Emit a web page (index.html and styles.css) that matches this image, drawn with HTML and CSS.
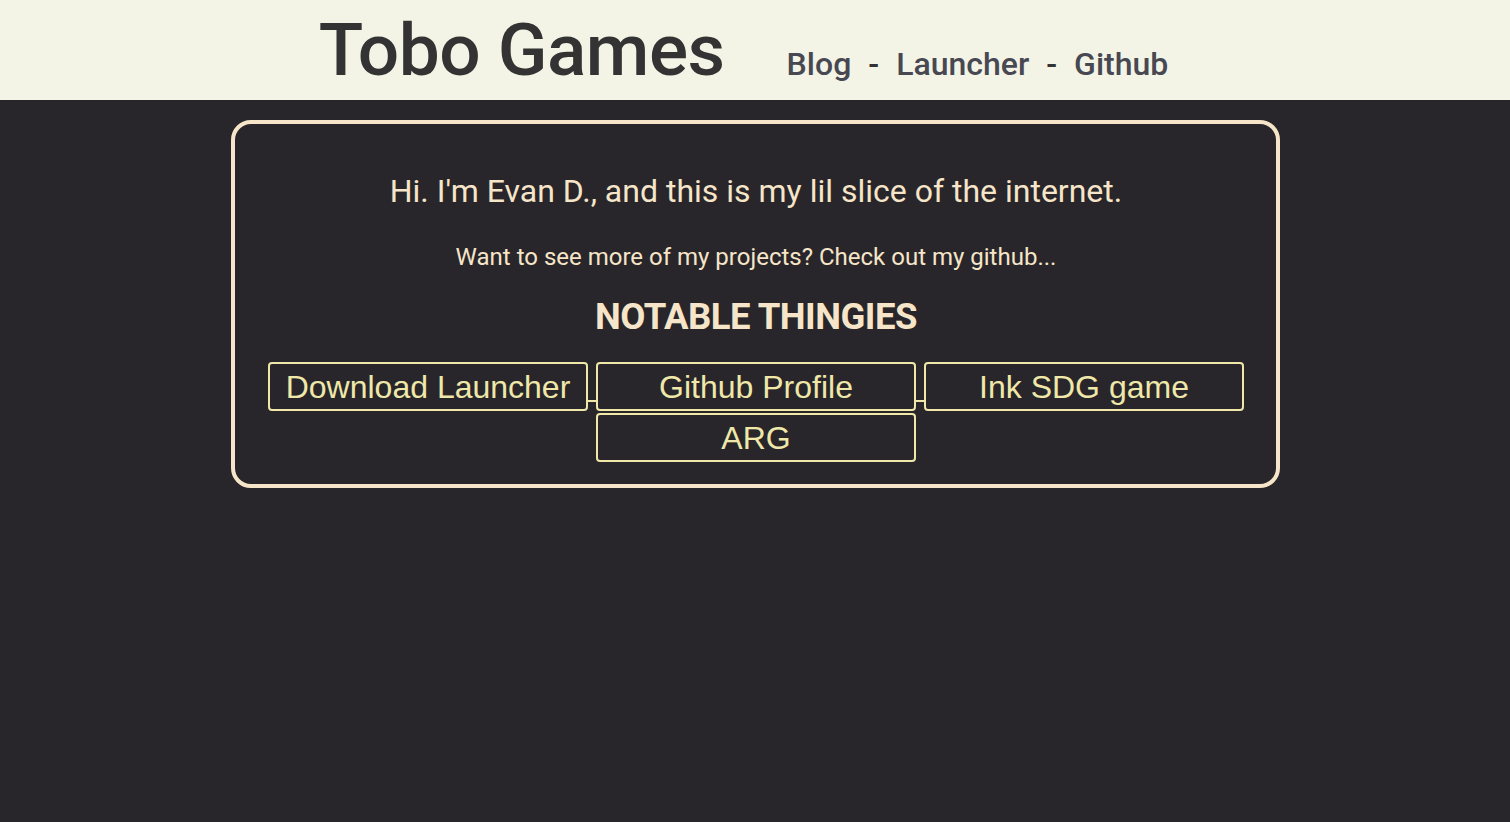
FILE: index.html
```html
<!DOCTYPE html>
<html>
<head>
<meta charset="utf-8">
<link rel="stylesheet" href="styles.css">
</head>
<body>
<header class="topbar">
  <h1 class="title">Tobo Games</h1>
  <nav class="nav">
    <a class="nav-link" href="#">Blog</a>
    <span class="sep">-</span>
    <a class="nav-link" href="#">Launcher</a>
    <span class="sep">-</span>
    <a class="nav-link" href="#">Github</a>
  </nav>
</header>
<main class="card">
  <p class="intro">Hi. I'm Evan D., and this is my lil slice of the internet.</p>
  <p class="sub">Want to see more of my projects? Check out my github...</p>
  <h2 class="heading">NOTABLE THINGIES</h2>
  <div class="buttons">
    <a class="btn join" href="#">Download Launcher</a>
    <a class="btn join" href="#">Github Profile</a>
    <a class="btn" href="#">Ink SDG game</a>
    <a class="btn" href="#">ARG</a>
  </div>
</main>
</body>
</html>
```
FILE: styles.css
```css
html, body {
  margin: 0;
  padding: 0;
}
body {
  background: #28262b;
  font-family: Roboto, "Liberation Sans", sans-serif;
  height: 822px;
}
.topbar {
  background: #f4f4e6;
  height: 100px;
  box-sizing: border-box;
  display: flex;
  justify-content: center;
  align-items: baseline;
  gap: 62px;
  padding-right: 23px;
}
.title {
  margin: 0;
  font-size: 73px;
  font-weight: 500;
  color: #333333;
  line-height: 100px;
  letter-spacing: -0.5px;
}
.nav {
  display: flex;
  align-items: baseline;
  gap: 17px;
  font-size: 32px;
  color: #484852;
  padding-top: 2px;
}
.nav-link {
  color: #484852;
  text-decoration: none;
  font-weight: 500;
}
.sep {
  color: #333;
  font-weight: 500;
}
.card {
  margin: 20px auto 0;
  width: 1049px;
  box-sizing: border-box;
  border: 4px solid #f6e5c8;
  border-radius: 20px;
  padding: 47px 29px 22px 31px;
  text-align: center;
  color: #f6e5c8;
}
.intro {
  margin: 0;
  font-size: 32px;
  line-height: 40px;
}
.sub {
  margin: 31px 0 0;
  font-size: 24px;
  line-height: 30px;
}
.heading {
  margin: 24px 0 0;
  font-size: 36.5px;
  font-weight: 700;
  line-height: 42px;
  letter-spacing: -0.5px;
}
.buttons {
  margin-top: 24px;
  display: flex;
  flex-wrap: wrap;
  justify-content: center;
  column-gap: 8px;
  row-gap: 2px;
}
.btn {
  position: relative;
  width: 320px;
  height: 49px;
  box-sizing: border-box;
  border: 2px solid #efe8a9;
  border-radius: 4px;
  color: #efe8a9;
  text-decoration: none;
  font-family: "Liberation Sans", Arial, sans-serif;
  font-size: 32px;
  line-height: 46px;
  text-align: center;
}
.join::after {
  content: "";
  position: absolute;
  right: -10px;
  top: 36px;
  width: 8px;
  height: 2px;
  background: #efe8a9;
}
```
